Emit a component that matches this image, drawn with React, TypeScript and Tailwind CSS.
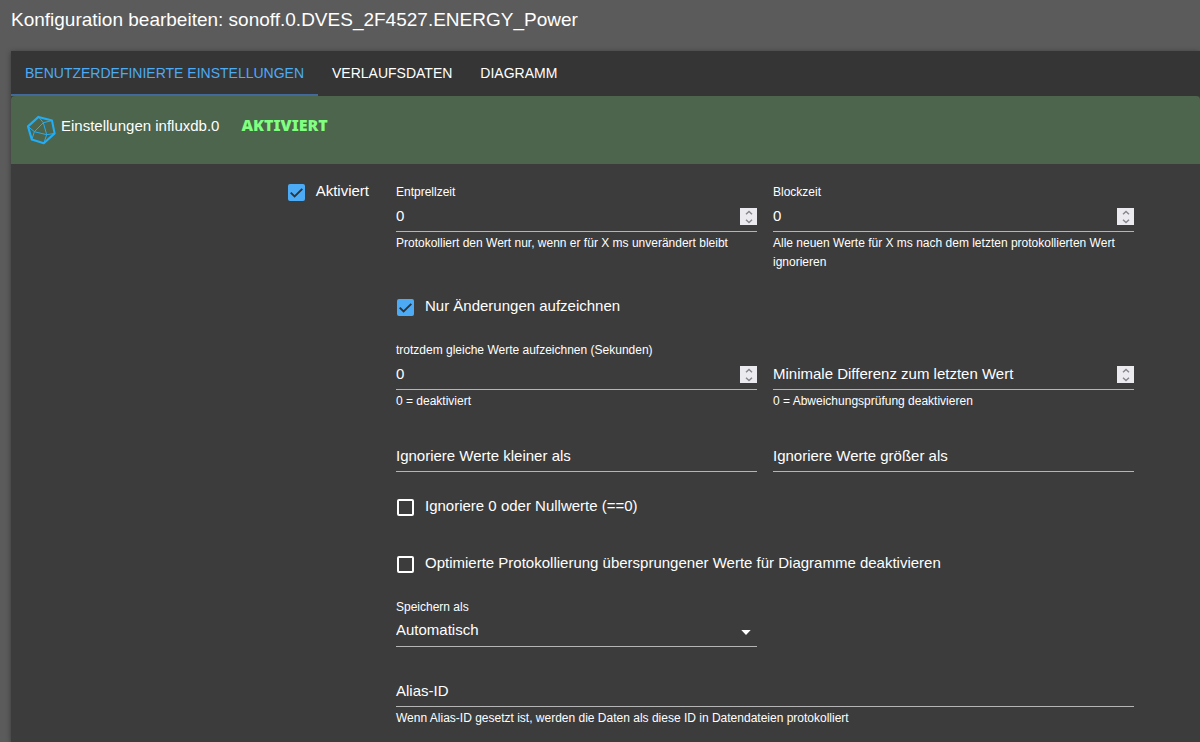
import { useId, useState } from "react";
import type { ReactNode } from "react";

const TABS = ["BENUTZERDEFINIERTE EINSTELLUNGEN", "VERLAUFSDATEN", "DIAGRAMM"];

function InfluxLogo() {
  return (
    <svg className="mt-px size-[30px] shrink-0" viewBox="0 0 30 30" fill="none" stroke="#22adf6" strokeLinejoin="round" aria-hidden="true">
      <path d="M12.5 1.9L26 5.6L28.6 18.4L17.8 28.2L5.8 24.6L2 11.4Z" strokeWidth="2.1" />
      <path
        d="M2 11.4L8.4 16.7L17.3 7.7L12.5 1.9M17.3 7.7L26 5.6M17.3 7.7L20.7 19.7L28.6 18.4M20.7 19.7L17.8 28.2M20.7 19.7L8.4 16.7L5.8 24.6"
        strokeWidth="1"
      />
    </svg>
  );
}

function Check({ label, initial = false }: { label: string; initial?: boolean }) {
  const [checked, setChecked] = useState(initial);
  return (
    <label className="flex h-8 cursor-pointer items-center gap-[11px] text-[15px]">
      <span className="grid shrink-0 pt-0.5 pl-px">
        <input
          type="checkbox"
          checked={checked}
          onChange={(e) => setChecked(e.target.checked)}
          className="col-start-1 row-start-1 size-[17px] appearance-none rounded-xs border-2 border-white checked:border-[#4dabf5] checked:bg-[#4dabf5]"
        />
        {checked && (
          <svg className="pointer-events-none col-start-1 row-start-1 size-[17px]" viewBox="0 0 17 17" fill="none" stroke="#303438" strokeWidth="1.9" aria-hidden="true">
            <path d="M2.7 8.6L6.6 12.5L14.3 4.8" />
          </svg>
        )}
      </span>
      <span>{label}</span>
    </label>
  );
}

function Spinner({ onStep }: { onStep: (delta: number) => void }) {
  return (
    <span className="mt-0.5 flex h-[17px] w-[17px] shrink-0 flex-col bg-[#ebebef] text-[#85858f]">
      <button type="button" aria-label="Erhöhen" onClick={() => onStep(1)} className="flex h-2 items-end justify-center">
        <svg className="h-[6px] w-2" viewBox="0 0 8 6" fill="none" stroke="currentColor" strokeWidth="1.4" aria-hidden="true">
          <path d="M1 4.3L4 1.4L7 4.3" />
        </svg>
      </button>
      <button type="button" aria-label="Verringern" onClick={() => onStep(-1)} className="flex h-[9px] items-center justify-center">
        <svg className="h-[6px] w-2" viewBox="0 0 8 6" fill="none" stroke="currentColor" strokeWidth="1.4" aria-hidden="true">
          <path d="M1 1.7L4 4.6L7 1.7" />
        </svg>
      </button>
    </span>
  );
}

function Helper({ children }: { children: ReactNode }) {
  return <p className="pt-0.5 text-xs leading-[19px]">{children}</p>;
}

type FieldProps = { label: string; initial?: string; helper?: string; numeric?: boolean };

function Field({ label, initial = "", helper, numeric = false }: FieldProps) {
  const id = useId();
  const [value, setValue] = useState(initial);
  const filled = value !== "";
  return (
    <div className="min-w-0 flex-1">
      <div className="grid grid-rows-[16px_32px]">
        <label
          htmlFor={id}
          className={
            filled
              ? "col-start-1 row-start-1 text-xs leading-4"
              : "pointer-events-none col-start-1 row-start-2 text-[15px] leading-[31px]"
          }
        >
          {label}
        </label>
        <div className="col-start-1 row-start-2 flex items-center border-b border-[#b5b5b5]">
          <input
            id={id}
            type="text"
            inputMode={numeric ? "numeric" : "text"}
            value={value}
            onChange={(e) => setValue(e.target.value)}
            className="h-full min-w-0 flex-1 bg-transparent text-[15px] outline-none"
          />
          {numeric && <Spinner onStep={(d) => setValue(String(Number(value) + d))} />}
        </div>
      </div>
      {helper && <Helper>{helper}</Helper>}
    </div>
  );
}

export default function App() {
  const [tab, setTab] = useState(0);
  return (
    <div className="flex min-h-screen flex-col bg-[#5b5b5b] font-['Liberation_Sans',Arial,sans-serif] text-white">
      <h1 className="flex h-[51px] items-center px-[11px] pb-2.5 text-[19px]">
        Konfiguration bearbeiten: sonoff.0.DVES_2F4527.ENERGY_Power
      </h1>
      <main className="ml-[11px] flex flex-1 flex-col bg-[#3c3c3c] shadow-[0_1px_5px_rgba(0,0,0,0.4)]">
        <div role="tablist" className="flex h-[45px] bg-[#353535]">
          {TABS.map((name, i) => (
            <button
              key={name}
              type="button"
              role="tab"
              aria-selected={tab === i}
              onClick={() => setTab(i)}
              className={
                tab === i
                  ? "border-b-2 border-[#41699c] px-[14px] text-sm text-[#4dabf5]"
                  : "border-b-2 border-transparent px-[14px] text-sm"
              }
            >
              {name}
            </button>
          ))}
        </div>

        <header className="flex h-[68px] items-start rounded-t-sm bg-[#4c654c] px-[15px] pt-[18px]">
          <InfluxLogo />
          <h2 className="pl-[5px] text-[15px] leading-6">Einstellungen influxdb.0</h2>
          <span className="pl-[22px] font-['Noto_Sans',sans-serif] text-base leading-[22px] font-black text-[#80ff80]">AKTIVIERT</span>
        </header>

        <form className="flex gap-[27px] pt-5 pr-[66px] pb-3">
          <div className="-mt-[9px] flex w-[358px] shrink-0 justify-end">
            <Check label="Aktiviert" initial />
          </div>
          <div className="min-w-0 flex-1">
            <div className="flex gap-4">
              <Field label="Entprellzeit" initial="0" numeric helper="Protokolliert den Wert nur, wenn er für X ms unverändert bleibt" />
              <Field label="Blockzeit" initial="0" numeric helper="Alle neuen Werte für X ms nach dem letzten protokollierten Wert ignorieren" />
            </div>
            <div className="mt-[18px]">
              <Check label="Nur Änderungen aufzeichnen" initial />
            </div>
            <div className="mt-5 flex gap-4">
              <Field label="trotzdem gleiche Werte aufzeichnen (Sekunden)" initial="0" numeric helper="0 = deaktiviert" />
              <Field label="Minimale Differenz zum letzten Wert" numeric helper="0 = Abweichungsprüfung deaktivieren" />
            </div>
            <div className="mt-[13px] flex gap-4">
              <Field label="Ignoriere Werte kleiner als" />
              <Field label="Ignoriere Werte größer als" />
            </div>
            <div className="mt-[18px]">
              <Check label="Ignoriere 0 oder Nullwerte (==0)" />
            </div>
            <div className="mt-[25px]">
              <Check label="Optimierte Protokollierung übersprungener Werte für Diagramme deaktivieren" />
            </div>
            <div className="mt-5 flex gap-4">
              <div className="flex-1">
                <label htmlFor="storage-type" className="block text-xs leading-4">
                  Speichern als
                </label>
                <div className="grid h-8 items-center border-b border-[#b5b5b5]">
                  <select
                    id="storage-type"
                    className="col-start-1 row-start-1 h-full w-full appearance-none bg-transparent text-[15px] outline-none"
                  >
                    <option>Automatisch</option>
                  </select>
                  <svg className="pointer-events-none col-start-1 row-start-1 mt-1 mr-1.5 h-[5px] w-[10px] justify-self-end" viewBox="0 0 10 5" fill="#fff" aria-hidden="true">
                    <path d="M0.3 0H9.7L5 5Z" />
                  </svg>
                </div>
              </div>
              <div className="flex-1" />
            </div>
            <div className="mt-3 flex">
              <Field label="Alias-ID" helper="Wenn Alias-ID gesetzt ist, werden die Daten als diese ID in Datendateien protokolliert" />
            </div>
          </div>
        </form>
      </main>
    </div>
  );
}
